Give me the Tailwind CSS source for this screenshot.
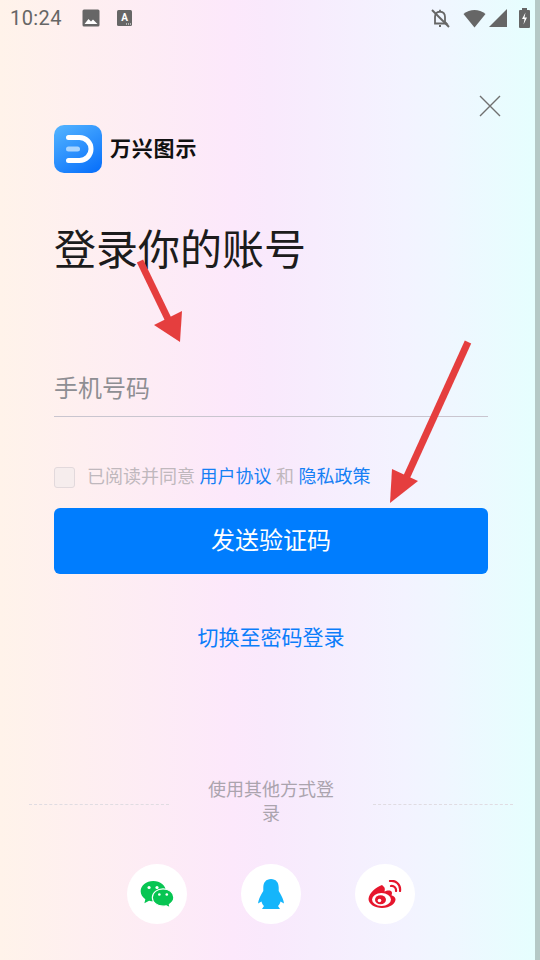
<!DOCTYPE html>
<html lang="zh">
<head>
<meta charset="utf-8">
<script src="https://cdn.jsdelivr.net/npm/@tailwindcss/browser@4"></script>
</head>
<body class="m-0">
<div class="relative w-[540px] h-[960px] overflow-hidden bg-[linear-gradient(90deg,#fff3ea_0%,#fce8fb_43%,#f9e9fc_50%,#f3f3ff_75%,#f0f6ff_82%,#e5fffe_100%)] font-['Roboto','Noto_Sans_CJK_SC',sans-serif]">
  <!-- status bar -->
  <div class="flex items-center h-[36px] pl-[10px] pr-[10px] text-[#666]">
    <span class="text-[20px] leading-[36px] w-[72px] tracking-[0.4px]">10:24</span>
    <svg class="w-[18px] h-[18px]" viewBox="0 0 18 18"><rect x="0.5" y="0.5" width="17" height="17" rx="1.5" fill="#666"/><path d="M2.5 15l4-5 2.5 2.5 2-2 4.500 4.500z" fill="#fff"/></svg>
    <svg class="w-[15px] h-[16px] ml-[17px]" viewBox="0 0 15 16"><rect width="15" height="16" rx="1.500" fill="#666"/><text x="7.500" y="11" text-anchor="middle" font-size="10" font-weight="700" fill="#fff" font-family="Roboto">A</text><path d="M9 14h1M11 14h1M13 14h1" stroke="#fff"/></svg>
    <div class="flex-1"></div>
    <svg class="w-[20px] h-[20px] mr-[13px]" viewBox="0 0 20 20" fill="none" stroke="#666" stroke-width="1.800"><path d="M5 15.500V9c0-3 2-5 5-5.300 3 .3 5 2.300 5 5.300v5l1.500 1.500z"/><path d="M9 18h2M10 3V1.800"/><path d="M2 2l17 17" stroke-width="2"/></svg>
    <svg class="w-[23px] h-[19px] mr-[3px]" viewBox="0 0 23 19"><path d="M0.500 5C7 -0.500 16 -0.500 22.500 5L11.500 18.500z" fill="#666"/></svg>
    <svg class="w-[18px] h-[18px] mr-[12px]" viewBox="0 0 18 18"><path d="M18 0v18H0z" fill="#666"/></svg>
    <svg class="w-[11px] h-[20px]" viewBox="0 0 11 20"><path d="M3 0h5v2h2a1 1 0 011 1v16a1 1 0 01-1 1H1a1 1 0 01-1-1V3a1 1 0 011-1h2z" fill="#666"/><path d="M6.500 4.500L3 11h2.500l-1 5.500L8 9.500H5.500z" fill="#fff"/></svg>
  </div>

  <!-- scrollbar strip -->
  <div class="absolute top-0 right-0 w-[5px] h-full bg-[#b5c9c6]"></div>

  <!-- close -->
  <div class="flex justify-end pr-[39px] pt-[59px]">
    <svg class="w-[22px] h-[22px]" viewBox="0 0 22 22" fill="none" stroke="#707070" stroke-width="1.400"><path d="M1 1l20 20M21 1L1 21"/></svg>
  </div>

  <div class="px-[54px]">
    <!-- logo -->
    <div class="flex items-center mt-[8px] gap-[8px]">
      <svg class="w-[48px] h-[48px]" viewBox="0 0 48 48">
        <defs><linearGradient id="lg" x1="0.200" y1="0" x2="0.800" y2="1"><stop offset="0" stop-color="#4fb0ff"/><stop offset="1" stop-color="#0a72fb"/></linearGradient></defs>
        <rect width="48" height="48" rx="10" fill="url(#lg)"/>
        <path d="M14.500 12.500h11a11.500 11.500 0 010 23h-11" fill="none" stroke="#fff" stroke-width="5" stroke-linecap="round"/>
        <path d="M14.500 24h9" stroke="#a8d4ff" stroke-width="5" stroke-linecap="round"/>
      </svg>
      <span class="text-[21px] leading-[48px] font-bold text-[#111] tracking-[0.8px]">万兴图示</span>
    </div>

    <h1 class="mt-[50px] text-[42px] leading-[56px] font-normal text-[#1c1c1c] w-[432px]">登录你的账号</h1>

    <!-- input -->
    <div class="mt-[83px] h-[55px] w-[434px] border-b border-[#c9c5cf] text-[24px] leading-[54px] text-[#8e8e93]">手机号码</div>

    <!-- agree -->
    <div class="flex items-center mt-[48px] h-[24px]">
      <span class="w-[21px] h-[21px] rounded-[3px] border border-[#e2d9dc] bg-[#f6eded]"></span>
      <span class="ml-[12px] text-[18px] leading-[24px] text-[#c0b8bd]">已阅读并同意 <span class="text-[#1580f5]">用户协议</span> 和 <span class="text-[#1580f5]">隐私政策</span></span>
    </div>

    <!-- button -->
    <button class="mt-[19px] block w-[434px] h-[66px] rounded-[6px] bg-[#007dfe] text-white text-[24px]">发送验证码</button>

    <div class="mt-[48px] w-[434px] text-center text-[21px] leading-[32px] text-[#0b7dfa]">切换至密码登录</div>
  </div>

  <!-- divider -->
  <div class="flex items-center justify-center mt-[124px] pl-[2px]">
    <div class="w-[140px] mt-[4px] border-t border-dashed border-[#e0dce2]"></div>
    <div class="w-[204px] flex justify-center"><span class="w-[128px] text-center text-[18px] leading-[24px] text-[#aba4ae]">使用其他方式登录</span></div>
    <div class="w-[140px] mt-[4px] border-t border-dashed border-[#e0dce2]"></div>
  </div>

  <!-- social -->
  <div class="flex justify-center gap-[54px] mt-[38px] pl-[2px]">
    <div class="w-[60px] h-[60px] rounded-full bg-white flex items-center justify-center">
      <svg class="w-[34px] h-[28px]" viewBox="0 0 36 30">
        <path d="M14 1C6.500 1 0.500 5.800 0.500 12c0 3.500 2 6.500 5 8.500L4.500 25l5-2.800c1.500.4 3 .6 4.500.6 7.500 0 13.500-4.800 13.500-10.800S21.500 1 14 1z" fill="#07c552"/>
        <path d="M24.500 9.500C18 9.500 13 13.600 13 18.800S18 28 24.500 28c1.200 0 2.300-.1 3.400-.4l4.100 2.200-.8-3.600c2.900-1.700 4.800-4.500 4.800-7.400 0-5.200-5.100-9.300-11.500-9.300z" fill="#07c552" stroke="#fff" stroke-width="1.200"/>
        <circle cx="9.500" cy="8" r="1.700" fill="#fff"/><circle cx="18" cy="8" r="1.700" fill="#fff"/>
        <circle cx="20.500" cy="15.500" r="1.400" fill="#fff"/><circle cx="28.500" cy="15.500" r="1.400" fill="#fff"/>
      </svg>
    </div>
    <div class="w-[60px] h-[60px] rounded-full bg-white flex items-center justify-center">
      <svg class="w-[26px] h-[30px]" viewBox="0 0 26 30" fill="#15b5fb">
        <path d="M13 0C8 0 5.300 3.500 5.300 8.500V12C3.500 15 1.500 18 .5 22L0 24.500 3.500 22.500C4 24.500 5 26 6 27L4 30H22L20 27C21 26 22 24.500 22.500 22.500L26 24.500 25.500 22C24.500 18 22.500 15 20.700 12V8.500C20.700 3.500 18 0 13 0z"/>
      </svg>
    </div>
    <div class="w-[60px] h-[60px] rounded-full bg-white flex items-center justify-center">
      <svg class="w-[34px] h-[28px]" viewBox="0 0 34 28">
        <path d="M14 5C8 7 1 13 .5 19c0 5 6.500 9 13.500 9 8 0 13.500-4.500 13.500-8.500 0-3-3-4-4-4.300.8-1.700.8-3.500-.6-4.300-2-1-5 0-6.400.6.500-2 .5-3.500-.5-4.500-.5-.7-1.300-1.500-2-2z" fill="#e6162d"/>
        <ellipse cx="13.500" cy="19.500" rx="9.500" ry="6.500" fill="#fff"/>
        <ellipse cx="12.500" cy="19.800" rx="5.500" ry="4.500" fill="#e6162d"/>
        <circle cx="11.500" cy="20.500" r="1.800" fill="#fff"/>
        <path d="M22 1c5-1 11 3 10 10M23 6c3-.5 5.500 2 5 5" fill="none" stroke="#e6162d" stroke-width="2.200" stroke-linecap="round"/>
      </svg>
    </div>
  </div>

  <!-- red arrows overlay -->
  <svg class="absolute inset-0 w-[540px] h-[960px] pointer-events-none" viewBox="0 0 540 960">
    <path d="M140 261L169 321" stroke="#e53e3e" stroke-width="7" fill="none"/>
    <path d="M154 325L182 311L180 342z" fill="#e53e3e"/>
    <path d="M468 342L403 485" stroke="#e53e3e" stroke-width="7" fill="none"/>
    <path d="M390 503L392 469L418 481z" fill="#e53e3e"/>
  </svg>
</div>
</body>
</html>
